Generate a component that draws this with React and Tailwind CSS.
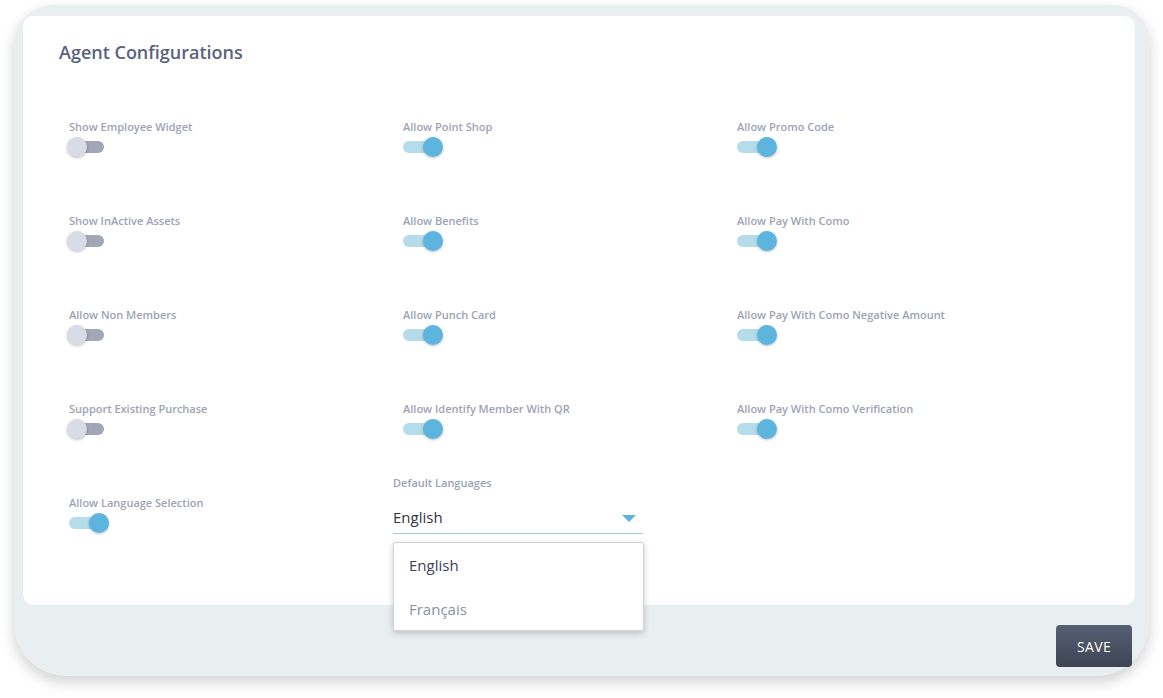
import React from 'react';

const font = { fontFamily: '"Open Sans", "Noto Sans", sans-serif' };

const Toggle = ({ on }) => (
  <div className="relative h-5 w-[36px] flex items-center">
    <div className={`h-3 w-[35px] rounded-full ${on ? 'bg-[#b5dcea]' : 'bg-[#a3a6b7]'}`} />
    {on ? (
      <div className="absolute right-[-4px] top-0 h-5 w-5 rounded-full bg-[#5db4df] shadow-[0_1px_3px_rgba(0,0,0,0.25)]" />
    ) : (
      <div className="absolute left-[-2px] top-0 h-5 w-5 rounded-full bg-[#d9dce6] shadow-[0_1px_3px_rgba(0,0,0,0.25)]" />
    )}
  </div>
);

const Setting = ({ label, on }) => (
  <div className="h-[94px]">
    <div className="text-[11px] leading-[14px] font-semibold text-[#9ea2b5]">{label}</div>
    <div className="mt-[3px]">
      <Toggle on={on} />
    </div>
  </div>
);

const rows = [
  [['Show Employee Widget', false], ['Allow Point Shop', true], ['Allow Promo Code', true]],
  [['Show InActive Assets', false], ['Allow Benefits', true], ['Allow Pay With Como', true]],
  [['Allow Non Members', false], ['Allow Punch Card', true], ['Allow Pay With Como Negative Amount', true]],
  [['Support Existing Purchase', false], ['Allow Identify Member With QR', true], ['Allow Pay With Como Verification', true]],
];

export default function App() {
  return (
    <div className="min-h-screen bg-white pt-[5px] pl-[14px]" style={font}>
      <div className="w-[1135px] h-[671px] rounded-tl-[40px] rounded-tr-[36px] rounded-bl-[52px] rounded-br-[52px] bg-[#e9eef1] shadow-[0_6px_14px_rgba(0,0,0,0.18)] pt-[11px] pl-[9px] pr-[14px]">
        <div className="h-[589px] rounded-[10px] bg-white pt-[24px] pl-[36px]">
          <h1 className="text-[18px] leading-[24px] font-semibold text-[#5b6180]">Agent Configurations</h1>
          <div className="mt-[56px] pl-[10px] grid grid-cols-[334px_334px_334px]">
            {rows.flat().map(([label, on]) => (
              <Setting key={label} label={label} on={on} />
            ))}
            <Setting label="Allow Language Selection" on={true} />
            <div className="-mt-[20px] -ml-[10px] relative">
              <div className="text-[11px] leading-[14px] font-semibold text-[#9ea2b5]">Default Languages</div>
              <div className="mt-[14px] w-[250px] h-[30px] border-b border-[#9ccbe4] flex items-center justify-between pb-[2px]">
                <span className="text-[15px] text-[#2f3445]">English</span>
                <svg width="14" height="7" viewBox="0 0 14 7" className="mr-[7px] mt-[2px]">
                  <path d="M0 0 L14 0 L7 7 Z" fill="#5db4df" />
                </svg>
              </div>
              <div className="absolute left-0 top-[66px] w-[251px] h-[89px] bg-white border border-[#cfd2d8] rounded-[2px] shadow-[0_2px_6px_rgba(0,0,0,0.2)] flex flex-col justify-center gap-[20px] pl-[15px] z-10">
                <span className="text-[15px] leading-[24px] text-[#3c4257]">English</span>
                <span className="text-[15px] leading-[24px] text-[#8a8fa6]">Français</span>
              </div>
            </div>
          </div>
        </div>
        <div className="flex justify-end pt-[20px] pr-[3px]">
          <button className="w-[76px] h-[42px] rounded-[4px] bg-gradient-to-b from-[#566073] to-[#3d4454] text-white text-[14px] font-normal tracking-wide">SAVE</button>
        </div>
      </div>
    </div>
  );
}
